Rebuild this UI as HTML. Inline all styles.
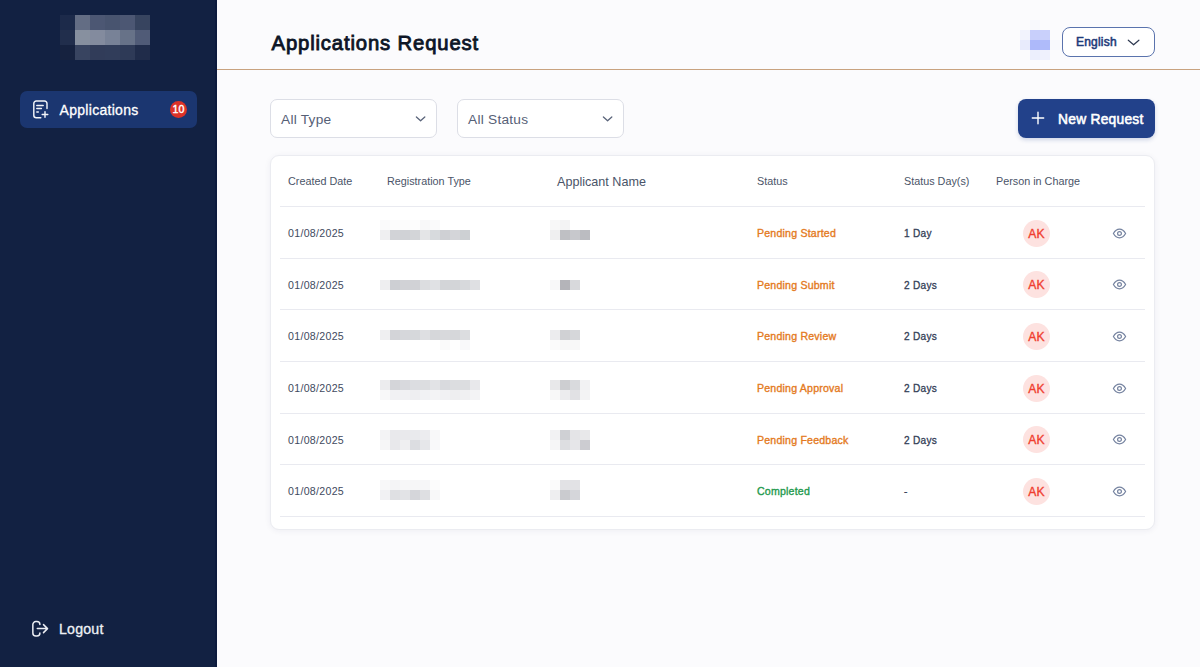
<!DOCTYPE html>
<html><head><meta charset="utf-8">
<style>
*{box-sizing:border-box;margin:0;padding:0}
html,body{width:1200px;height:667px;overflow:hidden}
body{background:#fbfbfd;font-family:"Liberation Sans",sans-serif;position:relative}
.abs{position:absolute}
#side{left:0;top:0;width:217px;height:667px;background:#122142;box-shadow:inset -2px 0 0 #0c1a3d}
.px{position:absolute}
#nav{left:20px;top:91px;width:177px;height:37px;background:#1b3670;border-radius:7px}
#nav .t{position:absolute;left:39.5px;top:12px;color:#fff;font-size:14px;letter-spacing:0.3px;-webkit-text-stroke:0.3px currentColor;line-height:15px}
#badge{position:absolute;left:150px;top:10px;width:17px;height:17px;border-radius:50%;background:#dc3228;color:#fff;font-size:10.6px;-webkit-text-stroke:0.4px #fff;text-align:center;line-height:17px}
#logout{left:59px;top:621px;color:#eef0f5;font-size:14.2px;letter-spacing:0.2px;-webkit-text-stroke:0.3px currentColor;line-height:16px}
#hdrline{left:217px;top:69px;width:983px;height:1px;background:#c8a27f}
#title{left:271.5px;top:31.5px;font-size:20.3px;letter-spacing:0.85px;-webkit-text-stroke:0.85px currentColor;color:#0d1526}
#lang{left:1062px;top:27px;width:93px;height:30px;border:1px solid #5a73ad;border-radius:8px;background:#fff}
#lang .t{position:absolute;left:13px;top:6.5px;font-size:12px;letter-spacing:0.2px;-webkit-text-stroke:0.55px currentColor;color:#1f3b7a;line-height:14px}
.sel{top:99px;width:167px;height:39px;border:1px solid #dcdee6;border-radius:7px;background:#fff}
.sel .t{position:absolute;left:10px;top:11.5px;font-size:13.7px;letter-spacing:0.25px;color:#566076;line-height:16px}
#btn{left:1018px;top:99px;width:137px;height:39px;background:#22418a;border-radius:8px;box-shadow:0 2px 4px rgba(34,65,138,0.2)}
#btn .t{position:absolute;left:40px;top:12.5px;color:#fff;font-size:13.8px;letter-spacing:0.25px;-webkit-text-stroke:0.55px currentColor;line-height:15px}
#card{left:270px;top:155px;width:885px;height:375px;background:#fff;border:1px solid #ebecf1;border-radius:9px;box-shadow:0 1px 6px rgba(30,40,80,0.06)}
.sep{position:absolute;left:280px;width:865px;height:1px;background:#e9eaf0}
.th{position:absolute;top:175px;font-size:10.8px;color:#4a5468;line-height:13px}
.td{position:absolute;font-size:10.6px;letter-spacing:0.3px;color:#414a5e;line-height:13px}
.st{position:absolute;font-size:10.6px;letter-spacing:0.2px;-webkit-text-stroke:0.35px currentColor;line-height:13px}
.days{position:absolute;font-size:10.1px;letter-spacing:0.3px;-webkit-text-stroke:0.3px currentColor;color:#353f58;line-height:13px}
.ak{position:absolute;left:1023px;width:27px;height:27px;border-radius:50%;background:#fde2e0;color:#f03e2f;font-size:12.2px;-webkit-text-stroke:0.35px currentColor;letter-spacing:0.2px;text-align:center;line-height:29px}
.eye{position:absolute;left:1112px}.eye svg{display:block}
.b{position:absolute;height:10px}
</style></head><body>
<div id="side" class="abs">
</div>
<div id="nav" class="abs">
  <svg class="px" style="left:12px;top:9px" width="20" height="20" viewBox="0 0 20 20" fill="none" stroke="#f2f4f8" stroke-width="1.45" stroke-linecap="round" stroke-linejoin="round">
    <path d="M8.8 17.7H4.3a2.5 2.5 0 0 1-2.5-2.5V3.5A2.5 2.5 0 0 1 4.3 1h8.2A2.5 2.5 0 0 1 15 3.5v5"/>
    <path d="M4.8 5.4h6.4M4.8 8.5h4.6M4.8 12h1.5M13 11.6v5.6M10.2 14.4h5.6"/>
  </svg>
  <div class="t">Applications</div>
  <div id="badge">10</div>
</div>
<svg class="abs" style="left:31px;top:620px" width="19" height="18" viewBox="0 0 19 18" fill="none" stroke="#eceef3" stroke-width="1.5" stroke-linecap="round" stroke-linejoin="round">
  <path d="M8.9 4.6A3 3 0 0 0 5.9 1.6H4.85A3 3 0 0 0 1.85 4.6V13A3 3 0 0 0 4.85 16H5.9A3 3 0 0 0 8.9 13"/>
  <path d="M6.3 8.6H16.5M12.5 4.6L16.5 8.6L12.5 12.6"/>
</svg>
<div id="logout" class="abs">Logout</div>

<div id="hdrline" class="abs"></div>
<div id="title" class="abs">Applications Request</div>
<div id="lang" class="abs"><div class="t">English</div>
  <svg class="px" style="left:64px;top:11px" width="14" height="8" viewBox="0 0 14 8" fill="none" stroke="#2e3950" stroke-width="1.2" stroke-linecap="round" stroke-linejoin="round"><path d="M1.3 1.2l5.3 4.6 5.3-4.6"/></svg>
</div>

<div class="sel abs" style="left:270px"><div class="t">All Type</div>
  <svg class="px" style="left:144px;top:15px" width="12" height="8" viewBox="0 0 12 8" fill="none" stroke="#5a647a" stroke-width="1.3" stroke-linecap="round" stroke-linejoin="round"><path d="M1.4 2l4.2 3.8 4.2-3.8"/></svg>
</div>
<div class="sel abs" style="left:457px"><div class="t">All Status</div>
  <svg class="px" style="left:144px;top:15px" width="12" height="8" viewBox="0 0 12 8" fill="none" stroke="#5a647a" stroke-width="1.3" stroke-linecap="round" stroke-linejoin="round"><path d="M1.4 2l4.2 3.8 4.2-3.8"/></svg>
</div>
<div id="btn" class="abs">
  <svg class="px" style="left:13px;top:12px" width="14" height="14" viewBox="0 0 14 14" fill="none" stroke="#fff" stroke-width="1.4" stroke-linecap="round"><path d="M7 1.3v11.4M1.3 7h11.4"/></svg>
  <div class="t">New Request</div>
</div>

<div id="card" class="abs"></div>
<div class="th" style="left:288px">Created Date</div>
<div class="th" style="left:387px">Registration Type</div>
<div class="th" style="left:557px;font-size:12.6px;top:175px;line-height:15px">Applicant Name</div>
<div class="th" style="left:757px">Status</div>
<div class="th" style="left:904px">Status Day(s)</div>
<div class="th" style="left:996px">Person in Charge</div>
<div class="b" style="left:60px;top:15px;width:15px;height:15px;background:#1c2a4a"></div>
<div class="b" style="left:75px;top:15px;width:15px;height:15px;background:#636d84"></div>
<div class="b" style="left:90px;top:15px;width:15px;height:15px;background:#4c5773"></div>
<div class="b" style="left:105px;top:15px;width:15px;height:15px;background:#48546f"></div>
<div class="b" style="left:120px;top:15px;width:15px;height:15px;background:#4c5773"></div>
<div class="b" style="left:135px;top:15px;width:15px;height:15px;background:#37445f"></div>
<div class="b" style="left:60px;top:30px;width:15px;height:15px;background:#212e4c"></div>
<div class="b" style="left:75px;top:30px;width:15px;height:15px;background:#87909f"></div>
<div class="b" style="left:90px;top:30px;width:15px;height:15px;background:#838b9e"></div>
<div class="b" style="left:105px;top:30px;width:15px;height:15px;background:#788297"></div>
<div class="b" style="left:120px;top:30px;width:15px;height:15px;background:#677288"></div>
<div class="b" style="left:135px;top:30px;width:15px;height:15px;background:#505b77"></div>
<div class="b" style="left:60px;top:45px;width:15px;height:15px;background:#16223f"></div>
<div class="b" style="left:75px;top:45px;width:15px;height:15px;background:#384460"></div>
<div class="b" style="left:90px;top:45px;width:15px;height:15px;background:#313c59"></div>
<div class="b" style="left:105px;top:45px;width:15px;height:15px;background:#313d5a"></div>
<div class="b" style="left:120px;top:45px;width:15px;height:15px;background:#2e3a57"></div>
<div class="b" style="left:135px;top:45px;width:15px;height:15px;background:#202c4a"></div>
<div class="b" style="left:1030px;top:20px;width:10px;height:10px;background:#f8f9fd"></div>
<div class="b" style="left:1020px;top:30px;width:10px;height:10px;background:#f2f3fd"></div>
<div class="b" style="left:1030px;top:30px;width:10px;height:10px;background:#c8cffb"></div>
<div class="b" style="left:1040px;top:30px;width:10px;height:10px;background:#c9d0fb"></div>
<div class="b" style="left:1020px;top:40px;width:10px;height:10px;background:#e8ebfc"></div>
<div class="b" style="left:1030px;top:40px;width:10px;height:10px;background:#adb9fa"></div>
<div class="b" style="left:1040px;top:40px;width:10px;height:10px;background:#afbbfa"></div>
<div class="b" style="left:1030px;top:50px;width:10px;height:10px;background:#eceffd"></div>
<div class="b" style="left:1040px;top:50px;width:10px;height:10px;background:#eff1fd"></div>
<div class="b" style="left:1050px;top:40px;width:10px;height:10px;background:#f8f9fd"></div>
<div class="sep" style="top:206px"></div>
<div class="sep" style="top:258px"></div>
<div class="sep" style="top:309px"></div>
<div class="sep" style="top:361px"></div>
<div class="sep" style="top:413px"></div>
<div class="sep" style="top:464px"></div>
<div class="sep" style="top:516px"></div>
<div class="td" style="left:288px;top:227.00px">01/08/2025</div>
<div class="st" style="left:757px;top:227.00px;color:#e47a1e">Pending Started</div>
<div class="days" style="left:904px;top:227.00px">1 Day</div>
<div class="ak" style="top:219.50px">AK</div>
<div class="eye" style="top:227.70px"><svg width="15" height="11" viewBox="0 0 15 11" fill="none" stroke="#74829f" stroke-width="1.2"><path d="M1.4 5.5C3.1 2.5 5.1 1.2 7.5 1.2S11.9 2.5 13.6 5.5C11.9 8.5 9.9 9.8 7.5 9.8S3.1 8.5 1.4 5.5Z"/><circle cx="7.5" cy="5.5" r="1.9"/></svg></div>
<div class="b" style="left:380px;top:220px;width:10px;background:#fafafb"></div>
<div class="b" style="left:390px;top:220px;width:10px;background:#fcfcfc"></div>
<div class="b" style="left:400px;top:220px;width:10px;background:#fcfcfc"></div>
<div class="b" style="left:410px;top:220px;width:10px;background:#fdfdfd"></div>
<div class="b" style="left:420px;top:220px;width:10px;background:#f8f8f9"></div>
<div class="b" style="left:430px;top:220px;width:10px;background:#fafafb"></div>
<div class="b" style="left:380px;top:230px;width:10px;background:#efeff1"></div>
<div class="b" style="left:390px;top:230px;width:10px;background:#d2d3d7"></div>
<div class="b" style="left:400px;top:230px;width:10px;background:#d0d2d6"></div>
<div class="b" style="left:410px;top:230px;width:10px;background:#d3d5d8"></div>
<div class="b" style="left:420px;top:230px;width:10px;background:#e4e5e7"></div>
<div class="b" style="left:430px;top:230px;width:10px;background:#d7dadd"></div>
<div class="b" style="left:440px;top:230px;width:10px;background:#cfd0d4"></div>
<div class="b" style="left:450px;top:230px;width:10px;background:#d4d5d9"></div>
<div class="b" style="left:460px;top:230px;width:10px;background:#cdd0d3"></div>
<div class="b" style="left:550px;top:220px;width:10px;background:#f8f8f8"></div>
<div class="b" style="left:560px;top:220px;width:10px;background:#f3f3f4"></div>
<div class="b" style="left:550px;top:230px;width:10px;background:#efeff0"></div>
<div class="b" style="left:560px;top:230px;width:10px;background:#bfc0c4"></div>
<div class="b" style="left:570px;top:230px;width:10px;background:#c7c8cc"></div>
<div class="b" style="left:580px;top:230px;width:10px;background:#bbbcc1"></div>
<div class="td" style="left:288px;top:278.67px">01/08/2025</div>
<div class="st" style="left:757px;top:278.67px;color:#e47a1e">Pending Submit</div>
<div class="days" style="left:904px;top:278.67px">2 Days</div>
<div class="ak" style="top:271.17px">AK</div>
<div class="eye" style="top:279.37px"><svg width="15" height="11" viewBox="0 0 15 11" fill="none" stroke="#74829f" stroke-width="1.2"><path d="M1.4 5.5C3.1 2.5 5.1 1.2 7.5 1.2S11.9 2.5 13.6 5.5C11.9 8.5 9.9 9.8 7.5 9.8S3.1 8.5 1.4 5.5Z"/><circle cx="7.5" cy="5.5" r="1.9"/></svg></div>
<div class="b" style="left:380px;top:280px;width:10px;background:#eeeef0"></div>
<div class="b" style="left:390px;top:280px;width:10px;background:#cdcfd3"></div>
<div class="b" style="left:400px;top:280px;width:10px;background:#d1d2d6"></div>
<div class="b" style="left:410px;top:280px;width:10px;background:#d1d2d6"></div>
<div class="b" style="left:420px;top:280px;width:10px;background:#dcdde0"></div>
<div class="b" style="left:430px;top:280px;width:10px;background:#e0e1e4"></div>
<div class="b" style="left:440px;top:280px;width:10px;background:#d3d5d8"></div>
<div class="b" style="left:450px;top:280px;width:10px;background:#d3d5d8"></div>
<div class="b" style="left:460px;top:280px;width:10px;background:#d7d9dc"></div>
<div class="b" style="left:470px;top:280px;width:10px;background:#dfe0e3"></div>
<div class="b" style="left:550px;top:280px;width:10px;background:#f8f8f9"></div>
<div class="b" style="left:560px;top:280px;width:10px;background:#b4b4b9"></div>
<div class="b" style="left:570px;top:280px;width:10px;background:#d8d9dc"></div>
<div class="td" style="left:288px;top:330.33px">01/08/2025</div>
<div class="st" style="left:757px;top:330.33px;color:#e47a1e">Pending Review</div>
<div class="days" style="left:904px;top:330.33px">2 Days</div>
<div class="ak" style="top:322.83px">AK</div>
<div class="eye" style="top:331.03px"><svg width="15" height="11" viewBox="0 0 15 11" fill="none" stroke="#74829f" stroke-width="1.2"><path d="M1.4 5.5C3.1 2.5 5.1 1.2 7.5 1.2S11.9 2.5 13.6 5.5C11.9 8.5 9.9 9.8 7.5 9.8S3.1 8.5 1.4 5.5Z"/><circle cx="7.5" cy="5.5" r="1.9"/></svg></div>
<div class="b" style="left:380px;top:330px;width:10px;background:#efeff1"></div>
<div class="b" style="left:390px;top:330px;width:10px;background:#d3d4d8"></div>
<div class="b" style="left:400px;top:330px;width:10px;background:#d6d7db"></div>
<div class="b" style="left:410px;top:330px;width:10px;background:#d6d8db"></div>
<div class="b" style="left:420px;top:330px;width:10px;background:#dedfe2"></div>
<div class="b" style="left:430px;top:330px;width:10px;background:#d6d7da"></div>
<div class="b" style="left:440px;top:330px;width:10px;background:#d8d9dc"></div>
<div class="b" style="left:450px;top:330px;width:10px;background:#d6d7da"></div>
<div class="b" style="left:460px;top:330px;width:10px;background:#dcdde0"></div>
<div class="b" style="left:440px;top:340px;width:10px;background:#fafafa"></div>
<div class="b" style="left:450px;top:340px;width:10px;background:#fefefe"></div>
<div class="b" style="left:460px;top:340px;width:10px;background:#f9f9fa"></div>
<div class="b" style="left:550px;top:330px;width:10px;background:#ececee"></div>
<div class="b" style="left:560px;top:330px;width:10px;background:#d0d1d4"></div>
<div class="b" style="left:570px;top:330px;width:10px;background:#d6d7da"></div>
<div class="b" style="left:550px;top:340px;width:10px;background:#fbfbfb"></div>
<div class="b" style="left:560px;top:340px;width:10px;background:#f8f8f8"></div>
<div class="b" style="left:570px;top:340px;width:10px;background:#f8f8f8"></div>
<div class="td" style="left:288px;top:382.00px">01/08/2025</div>
<div class="st" style="left:757px;top:382.00px;color:#e47a1e">Pending Approval</div>
<div class="days" style="left:904px;top:382.00px">2 Days</div>
<div class="ak" style="top:374.50px">AK</div>
<div class="eye" style="top:382.70px"><svg width="15" height="11" viewBox="0 0 15 11" fill="none" stroke="#74829f" stroke-width="1.2"><path d="M1.4 5.5C3.1 2.5 5.1 1.2 7.5 1.2S11.9 2.5 13.6 5.5C11.9 8.5 9.9 9.8 7.5 9.8S3.1 8.5 1.4 5.5Z"/><circle cx="7.5" cy="5.5" r="1.9"/></svg></div>
<div class="b" style="left:380px;top:380px;width:10px;background:#ececee"></div>
<div class="b" style="left:390px;top:380px;width:10px;background:#d4d5d9"></div>
<div class="b" style="left:400px;top:380px;width:10px;background:#d8d9dd"></div>
<div class="b" style="left:410px;top:380px;width:10px;background:#dcdde1"></div>
<div class="b" style="left:420px;top:380px;width:10px;background:#dcdde0"></div>
<div class="b" style="left:430px;top:380px;width:10px;background:#e2e3e6"></div>
<div class="b" style="left:440px;top:380px;width:10px;background:#d9dade"></div>
<div class="b" style="left:450px;top:380px;width:10px;background:#dcdde0"></div>
<div class="b" style="left:460px;top:380px;width:10px;background:#dcdde0"></div>
<div class="b" style="left:470px;top:380px;width:10px;background:#e8e8eb"></div>
<div class="b" style="left:380px;top:390px;width:10px;background:#f8f8f9"></div>
<div class="b" style="left:390px;top:390px;width:10px;background:#f1f1f3"></div>
<div class="b" style="left:400px;top:390px;width:10px;background:#f1f1f3"></div>
<div class="b" style="left:410px;top:390px;width:10px;background:#eeeef1"></div>
<div class="b" style="left:420px;top:390px;width:10px;background:#f1f2f4"></div>
<div class="b" style="left:430px;top:390px;width:10px;background:#f3f3f5"></div>
<div class="b" style="left:440px;top:390px;width:10px;background:#f1f1f3"></div>
<div class="b" style="left:450px;top:390px;width:10px;background:#eeeef0"></div>
<div class="b" style="left:460px;top:390px;width:10px;background:#f0f0f2"></div>
<div class="b" style="left:470px;top:390px;width:10px;background:#f3f3f5"></div>
<div class="b" style="left:550px;top:380px;width:10px;background:#e8e8ea"></div>
<div class="b" style="left:560px;top:380px;width:10px;background:#cdced1"></div>
<div class="b" style="left:570px;top:380px;width:10px;background:#d9dadd"></div>
<div class="b" style="left:580px;top:380px;width:10px;background:#f2f2f3"></div>
<div class="b" style="left:550px;top:390px;width:10px;background:#f8f8f8"></div>
<div class="b" style="left:560px;top:390px;width:10px;background:#ececee"></div>
<div class="b" style="left:570px;top:390px;width:10px;background:#e1e1e4"></div>
<div class="b" style="left:580px;top:390px;width:10px;background:#f3f3f4"></div>
<div class="td" style="left:288px;top:433.67px">01/08/2025</div>
<div class="st" style="left:757px;top:433.67px;color:#e47a1e">Pending Feedback</div>
<div class="days" style="left:904px;top:433.67px">2 Days</div>
<div class="ak" style="top:426.17px">AK</div>
<div class="eye" style="top:434.37px"><svg width="15" height="11" viewBox="0 0 15 11" fill="none" stroke="#74829f" stroke-width="1.2"><path d="M1.4 5.5C3.1 2.5 5.1 1.2 7.5 1.2S11.9 2.5 13.6 5.5C11.9 8.5 9.9 9.8 7.5 9.8S3.1 8.5 1.4 5.5Z"/><circle cx="7.5" cy="5.5" r="1.9"/></svg></div>
<div class="b" style="left:380px;top:430px;width:10px;background:#f3f3f5"></div>
<div class="b" style="left:390px;top:430px;width:10px;background:#e9e9ec"></div>
<div class="b" style="left:400px;top:430px;width:10px;background:#e9e9ec"></div>
<div class="b" style="left:410px;top:430px;width:10px;background:#e9eaed"></div>
<div class="b" style="left:420px;top:430px;width:10px;background:#ececef"></div>
<div class="b" style="left:430px;top:430px;width:10px;background:#f8f8f9"></div>
<div class="b" style="left:380px;top:440px;width:10px;background:#f6f6f7"></div>
<div class="b" style="left:390px;top:440px;width:10px;background:#e8e8eb"></div>
<div class="b" style="left:400px;top:440px;width:10px;background:#efeff1"></div>
<div class="b" style="left:410px;top:440px;width:10px;background:#dcdde1"></div>
<div class="b" style="left:420px;top:440px;width:10px;background:#e6e7ea"></div>
<div class="b" style="left:430px;top:440px;width:10px;background:#f9f9fa"></div>
<div class="b" style="left:550px;top:430px;width:10px;background:#f2f2f3"></div>
<div class="b" style="left:560px;top:430px;width:10px;background:#cfd0d4"></div>
<div class="b" style="left:570px;top:430px;width:10px;background:#e4e4e7"></div>
<div class="b" style="left:580px;top:430px;width:10px;background:#e8e8ea"></div>
<div class="b" style="left:550px;top:440px;width:10px;background:#f6f6f7"></div>
<div class="b" style="left:560px;top:440px;width:10px;background:#dddee1"></div>
<div class="b" style="left:570px;top:440px;width:10px;background:#e6e6e9"></div>
<div class="b" style="left:580px;top:440px;width:10px;background:#ccccd1"></div>
<div class="td" style="left:288px;top:485.34px">01/08/2025</div>
<div class="st" style="left:757px;top:485.34px;color:#1f9a4e">Completed</div>
<div class="days" style="left:904px;top:485.34px">-</div>
<div class="ak" style="top:477.84px">AK</div>
<div class="eye" style="top:486.04px"><svg width="15" height="11" viewBox="0 0 15 11" fill="none" stroke="#74829f" stroke-width="1.2"><path d="M1.4 5.5C3.1 2.5 5.1 1.2 7.5 1.2S11.9 2.5 13.6 5.5C11.9 8.5 9.9 9.8 7.5 9.8S3.1 8.5 1.4 5.5Z"/><circle cx="7.5" cy="5.5" r="1.9"/></svg></div>
<div class="b" style="left:380px;top:480px;width:10px;background:#f8f8f9"></div>
<div class="b" style="left:390px;top:480px;width:10px;background:#f4f4f6"></div>
<div class="b" style="left:400px;top:480px;width:10px;background:#f7f7f8"></div>
<div class="b" style="left:410px;top:480px;width:10px;background:#f6f6f7"></div>
<div class="b" style="left:420px;top:480px;width:10px;background:#f6f6f8"></div>
<div class="b" style="left:430px;top:480px;width:10px;background:#fcfcfc"></div>
<div class="b" style="left:380px;top:490px;width:10px;background:#f1f1f3"></div>
<div class="b" style="left:390px;top:490px;width:10px;background:#dfe0e3"></div>
<div class="b" style="left:400px;top:490px;width:10px;background:#e2e3e6"></div>
<div class="b" style="left:410px;top:490px;width:10px;background:#d5d6da"></div>
<div class="b" style="left:420px;top:490px;width:10px;background:#dedfe2"></div>
<div class="b" style="left:430px;top:490px;width:10px;background:#f8f8f9"></div>
<div class="b" style="left:550px;top:480px;width:10px;background:#fbfbfb"></div>
<div class="b" style="left:560px;top:480px;width:10px;background:#e2e2e5"></div>
<div class="b" style="left:570px;top:480px;width:10px;background:#e2e2e5"></div>
<div class="b" style="left:550px;top:490px;width:10px;background:#eeeef0"></div>
<div class="b" style="left:560px;top:490px;width:10px;background:#cacbcf"></div>
<div class="b" style="left:570px;top:490px;width:10px;background:#d5d6da"></div>
</body></html>
